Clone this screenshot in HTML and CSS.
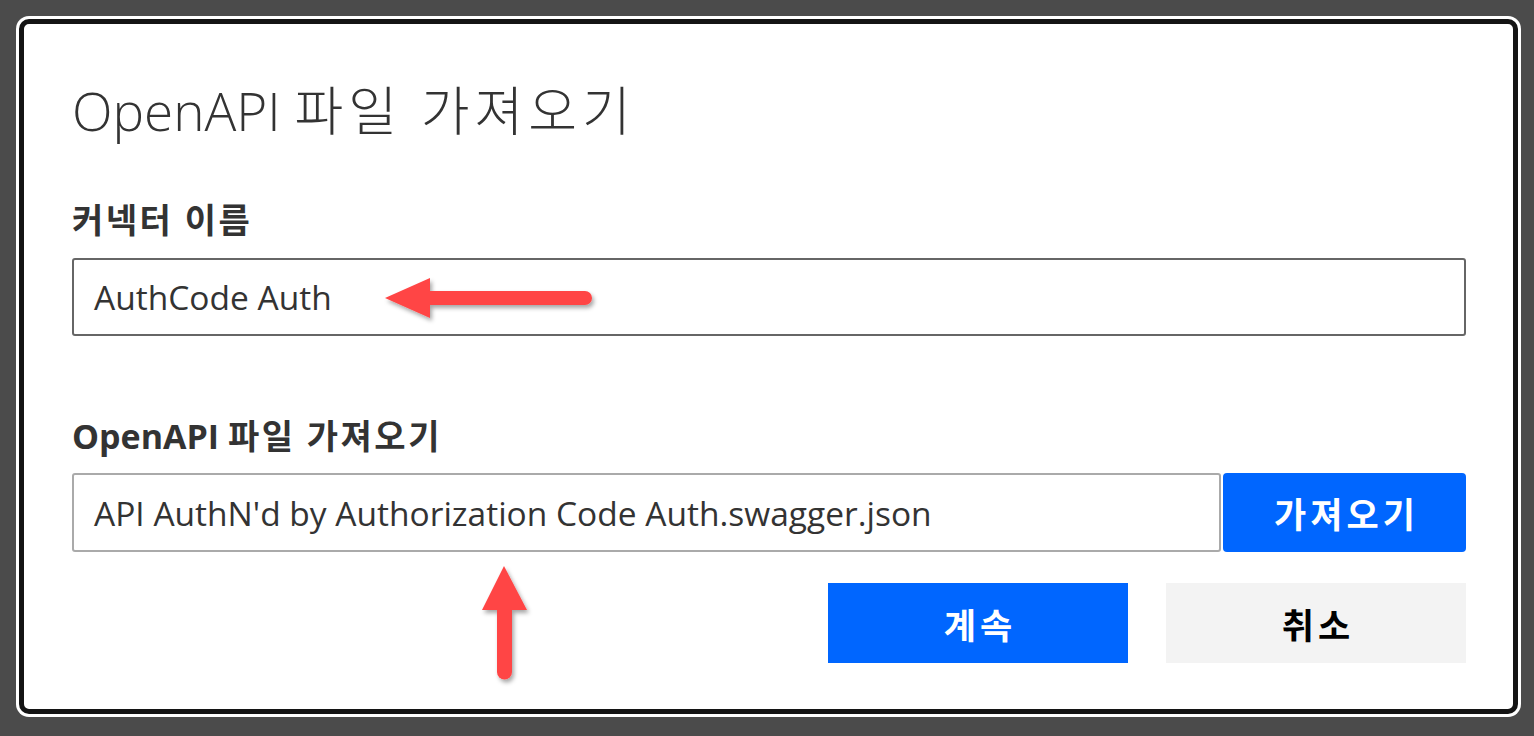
FILE: index.html
```html
<!DOCTYPE html>
<html lang="ko">
<head>
<meta charset="utf-8">
<link rel="stylesheet" href="styles.css">
</head>
<body>
<div class="dialog">
  <h1 class="title">OpenAPI <span class="ko">파일 가져오기</span></h1>
  <div class="field">
    <label class="label"><span class="ko">커넥터 이름</span></label>
    <div class="input input-dark">AuthCode Auth</div>
  </div>
  <div class="field field-file">
    <label class="label">OpenAPI <span class="ko">파일 가져오기</span></label>
    <div class="file-row">
      <div class="input input-light">API AuthN'd by Authorization Code Auth.swagger.json</div>
      <button class="btn btn-import">가져오기</button>
    </div>
  </div>
  <div class="actions">
    <button class="btn btn-primary">계속</button>
    <button class="btn btn-secondary">취소</button>
  </div>
</div>
<svg class="arrows" width="1534" height="736" viewBox="0 0 1534 736">
  <defs>
    <filter id="sh" x="-20%" y="-20%" width="140%" height="140%">
      <feDropShadow dx="2" dy="3" stdDeviation="2" flood-color="#000" flood-opacity="0.35"/>
    </filter>
  </defs>
  <g fill="#ff4545" filter="url(#sh)">
    <polygon points="385,298 430,278 430,318"/>
    <path d="M428 291 H585 A7 7 0 0 1 585 305 H428 Z"/>
    <polygon points="504,566 527,610 482,610"/>
    <path d="M497 608 V672 A7.5 7.5 0 0 0 512 672 V608 Z"/>
  </g>
</svg>
</body>
</html>
```
FILE: styles.css
```css
html, body {
  margin: 0;
  padding: 0;
}
body {
  background: #4b4b4b;
  width: 1534px;
  height: 736px;
  overflow: hidden;
  position: relative;
  font-family: "Open Sans", "Noto Sans CJK KR", sans-serif;
  color: #333;
}
.dialog {
  box-sizing: border-box;
  margin: 19px 0 0 19px;
  width: 1499px;
  height: 695px;
  background: #fff;
  border: 5px solid #141414;
  border-radius: 10px;
  box-shadow: 0 0 0 3px #fff;
  padding: 0 47px 0 48px;
  display: flex;
  flex-direction: column;
}
.title {
  margin: 52px 0 0 0;
  font-size: 53px;
  line-height: 70px;
  font-weight: 300;
  color: #333;
}
.title .ko {
  letter-spacing: 5px;
}
.field {
  display: flex;
  flex-direction: column;
}
.label {
  display: block;
  font-size: 34px;
  line-height: 44px;
  font-weight: 700;
  color: #333;
  margin-top: 52px;
  margin-bottom: 16px;
}
.label .ko {
  letter-spacing: 2.5px;
}
.field-file .label {
  margin-top: 78px;
  margin-bottom: 15px;
}
.input {
  box-sizing: border-box;
  height: 78px;
  border-radius: 3px;
  padding: 0 20px;
  display: flex;
  align-items: center;
  font-size: 33.5px;
  color: #333;
  white-space: nowrap;
}
.input-dark {
  border: 2px solid #666;
}
.input-light {
  border: 2px solid #aaa;
  flex: 1;
  height: 79px;
}
.file-row {
  display: flex;
  gap: 2px;
}
.btn {
  font-family: "Noto Sans CJK KR", "Open Sans", sans-serif;
  border: none;
  font-weight: 700;
  font-size: 35px;
  letter-spacing: 4px;
  text-indent: 4px;
  cursor: pointer;
}
.btn-import {
  width: 243px;
  height: 79px;
  background: #0066ff;
  color: #fff;
  border-radius: 4px;
}
.actions {
  margin-top: 31px;
  display: flex;
  justify-content: flex-end;
  gap: 38px;
}
.btn-primary {
  width: 300px;
  height: 80px;
  background: #0066ff;
  color: #fff;
}
.btn-secondary {
  width: 300px;
  height: 80px;
  background: #f3f3f3;
  color: #000;
}
.arrows {
  position: absolute;
  left: 0;
  top: 0;
  pointer-events: none;
}
```
